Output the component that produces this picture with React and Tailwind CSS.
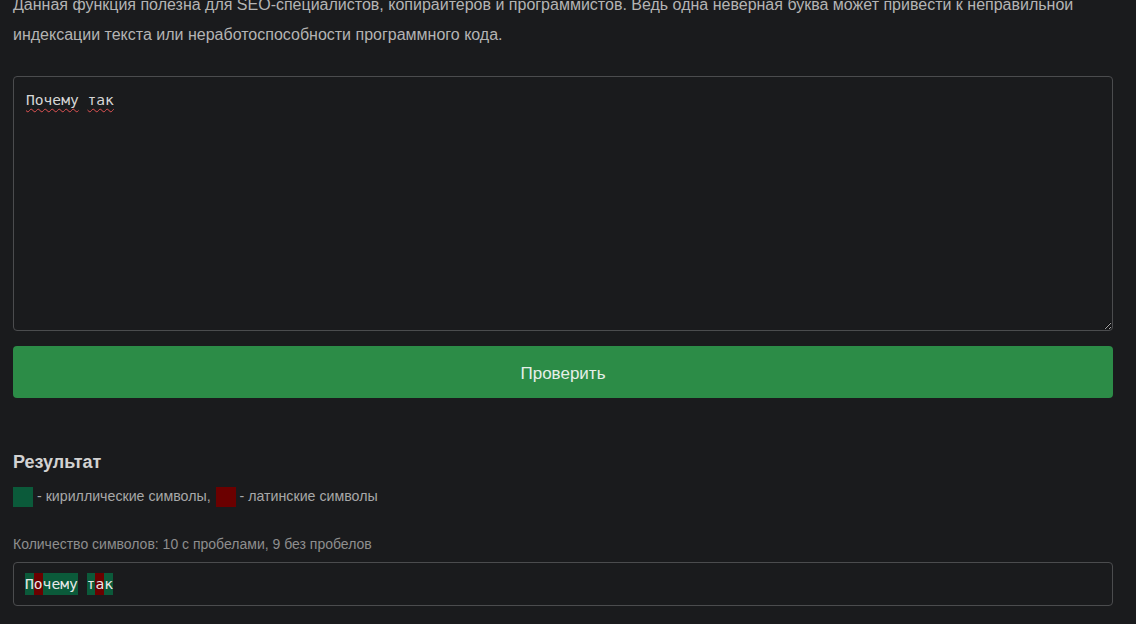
import React, { useState } from 'react';

const LATIN = /[a-zA-Z]/;
const CYR = /[а-яА-ЯёЁ]/;

const App = () => {
  const [text, setText] = useState('Почему так');
  // simulated result: "о" in "Почему" and "а" in "так" are latin
  const checked = 'Пoчему тaк';

  const withSpaces = checked.length;
  const noSpaces = checked.replace(/\s/g, '').length;

  return (
    <div className="min-h-screen bg-[#1a1b1d] font-['Liberation_Sans',sans-serif] text-[#b9b9b9]">
      <div className="w-[1100px] ml-[13px] -mt-[10px]">
        <p className="text-[16px] leading-[30px] text-[#b4b4b4]">
          Данная функция полезна для SEO-специалистов, копирайтеров и программистов. Ведь одна неверная буква может привести к неправильной индексации текста или неработоспособности программного кода.
        </p>

        {/* Input */}
        <div className="relative mt-[26px]">
          <textarea
            value={text}
            onChange={(e) => setText(e.target.value)}
            spellCheck={false}
            className="block w-full h-[255px] bg-[#1a1b1d] border border-[#4b4c4e] rounded-[4px] px-[12px] py-[11px] font-['DejaVu_Sans_Mono',monospace] text-[14.6px] leading-[24px] text-[#d6d6d6] outline-none resize-y"
          />
          <div className="pointer-events-none absolute left-[13px] top-[12px] font-['DejaVu_Sans_Mono',monospace] text-[14.6px] leading-[24px] text-transparent whitespace-pre">
            <span className="underline decoration-wavy decoration-[#e05252] decoration-1 underline-offset-[3px]">Почему</span>{' '}
            <span className="underline decoration-wavy decoration-[#e05252] decoration-1 underline-offset-[3px]">так</span>
          </div>
        </div>

        <button className="mt-[15px] w-full h-[52px] pt-[3px] rounded-[4px] bg-[#2c8c47] text-[17px] text-[#e6efe8]">
          Проверить
        </button>

        {/* Result */}
        <h3 className="mt-[52px] text-[18px] font-bold leading-[24px] text-[#d2d2d2]">Результат</h3>
        <div className="mt-[12px] flex items-center text-[14.2px] text-[#a8a8a8]">
          <span className="inline-block w-[20px] h-[20px] bg-[#0b5a3a]" />
          <span className="ml-[4px]">- кириллические символы,</span>
          <span className="inline-block ml-[5px] w-[20px] h-[20px] bg-[#6b0000]" />
          <span className="ml-[4px]">- латинские символы</span>
        </div>

        <div className="mt-[27px] text-[14px] leading-[20px] text-[#8e8e8e]">
          Количество символов: {withSpaces} с пробелами, {noSpaces} без пробелов
        </div>
        <div className="mt-[8px] h-[44px] flex items-center border border-[#4b4c4e] rounded-[4px] px-[11px] font-['DejaVu_Sans_Mono',monospace] text-[14.6px] text-[#e8e8e8] whitespace-pre">
          {checked.split('').map((ch, i) => (
            <span
              key={i}
              className={LATIN.test(ch) ? 'bg-[#6b0000]' : CYR.test(ch) ? 'bg-[#0b5a3a]' : ''}
            >
              {ch}
            </span>
          ))}
        </div>
      </div>
    </div>
  );
};

export default App;
